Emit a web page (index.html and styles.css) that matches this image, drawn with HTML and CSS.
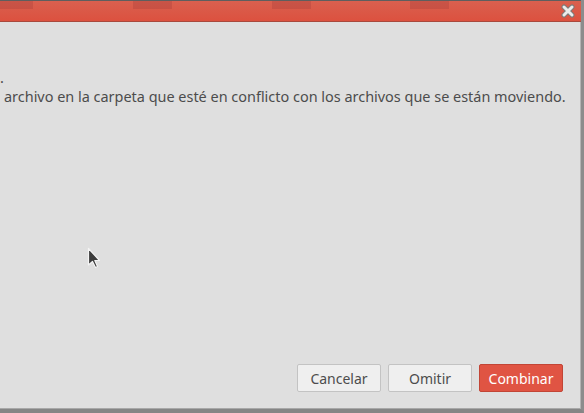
FILE: index.html
```html
<!DOCTYPE html>
<html>
<head>
<meta charset="utf-8">
<link rel="stylesheet" href="styles.css">
</head>
<body>
<div class="window">
  <div class="titlebar">
    <div class="stripes">
      <span class="stripe s1"></span>
      <span class="stripe s2"></span>
      <span class="stripe s3"></span>
      <span class="stripe s4"></span>
    </div>
    <svg class="close" width="14" height="14" viewBox="0 0 14 14">
      <path d="M3 3 L11 11 M11 3 L3 11" stroke="#7b7b7b" stroke-width="5" stroke-linecap="round"/>
      <path d="M3 3 L11 11 M11 3 L3 11" stroke="#ebebeb" stroke-width="3" stroke-linecap="round"/>
    </svg>
  </div>
  <div class="body">
    <div class="message">
      <div class="line line-prev">.</div>
      <div class="line line-main">archivo en la carpeta que esté en conflicto con los archivos que se están moviendo.</div>
    </div>
    <div class="canvas">
      <svg class="cursor" width="14" height="22" viewBox="0 0 14 22">
        <path d="M1.5 1.5 L1.5 18 L5.5 14.5 L8.5 20.5 L10.5 19.5 L7.8 13.5 L12.5 13.5 Z" fill="#3c3c3c" stroke="#f4f4f4" stroke-width="1.2" stroke-linejoin="round"/>
      </svg>
    </div>
    <div class="actions">
      <button class="btn">Cancelar</button>
      <button class="btn">Omitir</button>
      <button class="btn btn-primary">Combinar</button>
    </div>
  </div>
</div>
</body>
</html>
```

FILE: styles.css
```css
html, body {
  margin: 0;
  padding: 0;
  width: 584px;
  height: 413px;
  overflow: hidden;
  background: #8a8a8a;
}

.window {
  width: 584px;
  height: 413px;
  display: flex;
  flex-direction: column;
  box-sizing: border-box;
  border-right: 3px solid #8c8c8c;
  border-bottom: 4px solid #858585;
  font-family: "Noto Sans", "Open Sans", sans-serif;
}

.titlebar {
  position: relative;
  flex: none;
  border-top: 1px solid #5e5e5e;
  border-bottom: 1px solid #a9493d;
  background: linear-gradient(#d9604f, #dc513f);
  box-sizing: border-box;
  height: 22px;
}

.stripes {
  display: flex;
  height: 8px;
}

.stripe {
  height: 8px;
  background: rgba(150, 50, 50, 0.25);
}

.s1 { width: 33px; }
.s2 { width: 39px; margin-left: 100px; }
.s3 { width: 39px; margin-left: 100px; }
.s4 { width: 39px; margin-left: 99px; }

.close {
  position: absolute;
  right: 6px;
  top: 3px;
}

.body {
  flex: 1;
  display: flex;
  flex-direction: column;
  background: #dfdfdf;
  border-right: 1px solid #b4b4b4;
  border-bottom: 1px solid #a8a8a8;
}

.message {
  padding-top: 46px;
  color: #4c4c4c;
  font-size: 14.45px;
  line-height: 19px;
  white-space: nowrap;
}

.line-prev {
  padding-left: 0;
}

.line-main {
  padding-left: 4px;
}

.canvas {
  flex: 1;
  position: relative;
}

.cursor {
  position: absolute;
  left: 87px;
  top: 141px;
}

.actions {
  display: flex;
  justify-content: flex-end;
  gap: 7px;
  padding: 0 17px 16px 0;
}

.btn {
  width: 84px;
  height: 28px;
  box-sizing: border-box;
  border: 1px solid #c3c3c3;
  border-radius: 2px;
  background: #efefef;
  color: #4c4c4c;
  font-family: "Noto Sans", "Open Sans", sans-serif;
  font-size: 14px;
  padding: 0;
}

.btn-primary {
  background: #e05443;
  border-color: #c24536;
  color: #ffffff;
}
```
